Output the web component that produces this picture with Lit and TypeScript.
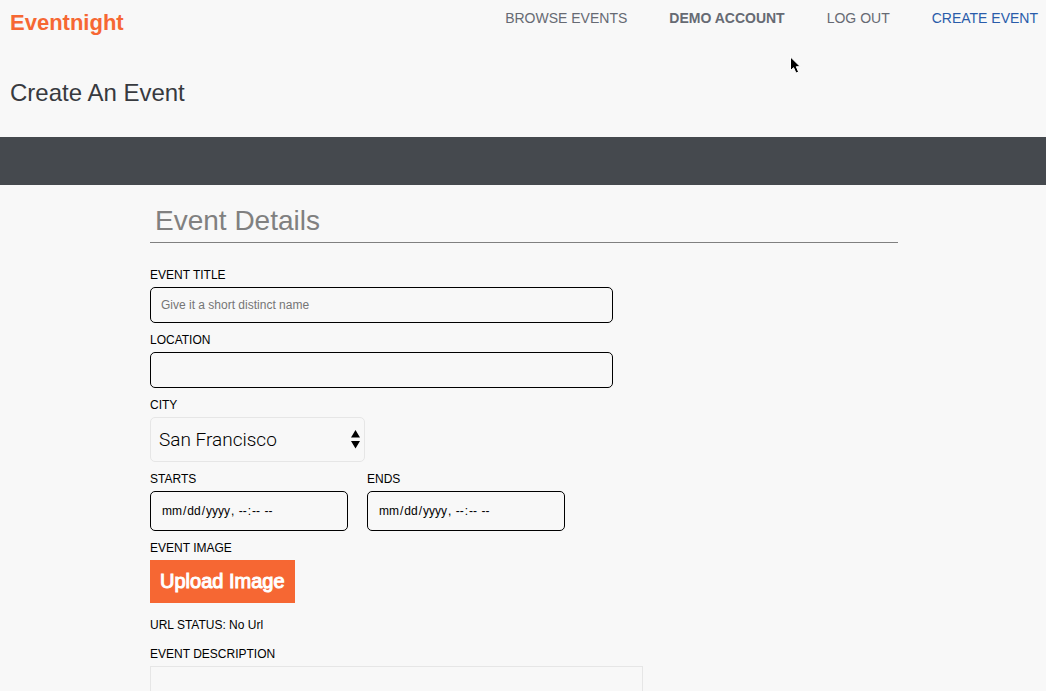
import { LitElement, html, css } from "lit";
import { customElement } from "lit/decorators.js";

@customElement("app-root")
export class AppRoot extends LitElement {
  static styles = css`
    :host {
      display: block;
      height: 100vh;
      overflow: auto;
      scrollbar-width: none;
      background: #f8f8f8;
      color: #000;
      font: 12px/16px "Liberation Sans", Arial, sans-serif;
    }
    *,
    *::before,
    *::after {
      box-sizing: border-box;
    }
    h1,
    h2,
    p {
      margin: 0;
    }
    a {
      color: inherit;
      text-decoration: none;
    }
    .top {
      display: flex;
      justify-content: space-between;
      align-items: flex-start;
      padding: 8px 8px 0 10px;
    }
    .logo {
      color: #f66733;
      font-size: 22px;
      line-height: 30px;
      font-weight: bold;
    }
    .links {
      display: flex;
      gap: 42px;
      color: #666a73;
      font-size: 14px;
      line-height: 20px;
    }
    .account {
      font-weight: bold;
    }
    .create {
      color: #2a5caa;
    }
    .title {
      padding: 38px 10px 28px;
      color: #373a3f;
      font-size: 24px;
      line-height: 33px;
      font-weight: normal;
    }
    .band {
      height: 48px;
      background: #45494e;
    }
    .form {
      display: flex;
      flex-direction: column;
      padding: 16px 148px 40px 150px;
    }
    .section {
      padding: 0 5px 2px;
      margin-bottom: 24px;
      border-bottom: 1px solid #808080;
      color: #808080;
      font-size: 28px;
      line-height: 39px;
      font-weight: normal;
    }
    .field {
      display: flex;
      flex-direction: column;
      align-items: flex-start;
      gap: 4px;
      margin-bottom: 9px;
    }
    .box {
      width: 463px;
      max-width: 100%;
      height: 36px;
      padding: 0 10px;
      border: 1px solid #000;
      border-radius: 5px;
      background: transparent;
      color: #000;
      font: 12px/16px "Liberation Sans", Arial, sans-serif;
    }
    .box::placeholder {
      color: #757575;
    }
    .date {
      width: 198px;
      height: 40px;
    }
    .date::-webkit-calendar-picker-indicator {
      display: none;
    }
    .dates {
      display: flex;
      gap: 19px;
    }
    .picker {
      position: relative;
      width: 215px;
    }
    .city {
      appearance: none;
      width: 100%;
      height: 45px;
      padding: 0 8px;
      border: 1px solid #e6e6e6;
      border-radius: 5px;
      background: transparent;
      color: #000;
      font: 300 19px/24px Roboto, sans-serif;
    }
    .arrows {
      position: absolute;
      right: 4px;
      top: 12px;
      pointer-events: none;
    }
    .upload {
      height: 43px;
      padding: 0 10px 2px;
      border: 0;
      background: #f66733;
      color: #fff;
      font: 20px/24px "Liberation Sans", Arial, sans-serif;
      -webkit-text-stroke: 1px #fff;
    }
    .status {
      margin: 5px 0 13px;
    }
    .description {
      width: 493px;
      max-width: 100%;
      height: 160px;
      padding: 10px;
      border: 1px solid #e6e6e6;
      background: transparent;
      font: 12px/16px "Liberation Sans", Arial, sans-serif;
      resize: none;
    }
    .cursor {
      position: absolute;
      left: 788px;
      top: 55px;
      pointer-events: none;
    }
  `;

  render() {
    return html`
      <header>
        <div class="top">
          <a class="logo" href="#">Eventnight</a>
          <nav class="links">
            <a href="#">BROWSE EVENTS</a>
            <a class="account" href="#">DEMO ACCOUNT</a>
            <a href="#">LOG OUT</a>
            <a class="create" href="#">CREATE EVENT</a>
          </nav>
        </div>
        <h1 class="title">Create An Event</h1>
        <div class="band"></div>
      </header>
      <form class="form">
        <h2 class="section">Event Details</h2>
        <div class="field">
          <label for="name">EVENT TITLE</label>
          <input class="box" id="name" type="text" placeholder="Give it a short distinct name" />
        </div>
        <div class="field">
          <label for="location">LOCATION</label>
          <input class="box" id="location" type="text" />
        </div>
        <div class="field">
          <label for="city">CITY</label>
          <div class="picker">
            <select class="city" id="city">
              <option>San Francisco</option>
            </select>
            <svg class="arrows" width="10" height="20" viewBox="0 0 10 20">
              <path d="M4.5 1 L9 8.5 H0Z M4.5 19.5 L9 12 H0Z" />
            </svg>
          </div>
        </div>
        <div class="dates">
          <div class="field">
            <label for="starts">STARTS</label>
            <input class="box date" id="starts" type="datetime-local" />
          </div>
          <div class="field">
            <label for="ends">ENDS</label>
            <input class="box date" id="ends" type="datetime-local" />
          </div>
        </div>
        <div class="field">
          <label for="upload">EVENT IMAGE</label>
          <button class="upload" id="upload" type="button">Upload Image</button>
        </div>
        <p class="status">URL STATUS: No Url</p>
        <div class="field">
          <label for="description">EVENT DESCRIPTION</label>
          <textarea class="description" id="description"></textarea>
        </div>
      </form>
      <svg class="cursor" width="14" height="22" viewBox="0 0 14 22">
        <path
          d="M2.5 2 V15.5 L5.6 12.7 L8 18.1 L10.6 17 L8.3 11.7 H12.3Z"
          fill="#000"
          stroke="#fff"
          stroke-width="1"
        />
      </svg>
    `;
  }
}
